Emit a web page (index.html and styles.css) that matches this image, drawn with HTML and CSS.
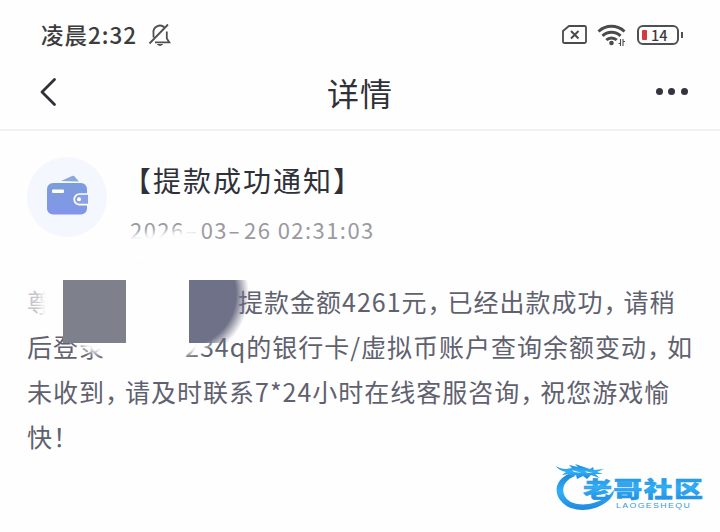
FILE: index.html
```html
<!DOCTYPE html>
<html lang="zh-CN">
  <head>
    <meta charset="UTF-8" />
    <meta name="viewport" content="width=device-width, initial-scale=1.0" />
    <title>详情</title>
    <link rel="stylesheet" href="styles.css">
  </head>
  <body>
    <div class="status-bar">
      <span class="clock">凌晨2:32</span>
      <svg class="bell" width="24" height="24" viewBox="0 0 24 24" fill="none" stroke="#505052" stroke-width="1.8">
        <path d="M5.500 14.500V10a6.500 6.500 0 0 1 11-5.500M18.800 8.500v7l2.500 3.800H7M1.500 20.500L20 1.500" />
        <path d="M9.500 21.500h5l-2.500 1z" fill="#505052" stroke-width="1" />
      </svg>
      <div class="status-icons">
        <svg width="26" height="22" viewBox="0 0 26 22" fill="none" stroke="#4b4b4d" stroke-width="1.8">
          <path d="M7 2h15.500q1.500 0 1.500 1.500v14q0 1.500-1.500 1.500h-20Q1 19 1 17.500V7z" />
          <path d="M9 7l7.500 7.500M16.500 7L9 14.500" stroke-width="2" />
        </svg>
        <svg class="wifi" width="30" height="24" viewBox="0 0 30 24" fill="none" stroke="#4b4b4d" stroke-width="3">
          <path d="M1.500 8.500a19 19 0 0 1 26 0M5.500 12.800a13 13 0 0 1 18 0M9.300 17a7.500 7.500 0 0 1 10.400 0" />
          <circle cx="14.500" cy="20" r="2.300" fill="#4b4b4d" stroke="none" />
          <path d="M21.500 20.500h2v-4.500v7M28 18.500h-2v4.500v-7" stroke-width="1.100" />
        </svg>
        <div class="battery"><i></i><span>14</span></div>
      </div>
    </div>

    <header class="nav-bar">
      <svg class="back" width="18" height="30" viewBox="0 0 18 30" fill="none" stroke="#2f3038" stroke-width="2.800" stroke-linecap="round" stroke-linejoin="round">
        <path d="M15.500 2.500L3 15 15.500 27.500" />
      </svg>
      <h1>详情</h1>
      <div class="more"><i></i><i></i><i></i></div>
    </header>

    <main class="content">
      <section class="notice">
        <div class="notice-icon">
          <svg width="42" height="42" viewBox="0 0 42 42">
            <defs>
              <linearGradient id="wallet" x1="0" y1="0" x2="0" y2="1">
                <stop offset="0" stop-color="#7b9ddc" />
                <stop offset="1" stop-color="#8295ea" />
              </linearGradient>
            </defs>
            <path d="M15 6L26 1q2-1 3 1L33 6.500z" fill="#8ca9dd" />
            <rect x="1" y="8" width="40" height="31.500" rx="6" fill="url(#wallet)" />
            <rect x="6" y="14.500" width="12" height="3.500" rx="1" fill="#fff" />
            <path d="M42 19H33.500a5.300 5.300 0 0 0 0 10.600H42" fill="#8aa1e8" stroke="#fff" stroke-width="1.700" />
            <circle cx="33" cy="24.300" r="2" fill="#fff" />
          </svg>
        </div>
        <div class="notice-head">
          <h2>【提款成功通知】</h2>
          <p class="time">2026<b>-</b>03<b>-</b>26 02:31:03</p>
          <span class="smudge smudge-date"></span>
        </div>
      </section>

      <section class="message">
        <p><span class="name">尊</span>提款金额4261元<i>，</i>已经出款成功<i>，</i>请稍</p>
        <p><span class="account">后登录</span>234q的银行卡/虚拟币账户查询余额变动<i>，</i>如</p>
        <p>未收到<i>，</i>请及时联系7*24小时在线客服咨询<i>，</i>祝您游戏愉</p>
        <p>快<i>！</i></p>
        <span class="smudge smudge-name"></span>
        <span class="smudge smudge-account"></span>
        <span class="block block-left"></span>
        <span class="block block-right"></span>
      </section>
    </main>

    <div class="watermark">
      <svg width="150" height="52" viewBox="0 0 150 52">
        <defs>
          <linearGradient id="blue" x1="0" y1="0" x2="0" y2="1">
            <stop offset="0" stop-color="#1f86d6" />
            <stop offset="0.500" stop-color="#2fb0f6" />
            <stop offset="1" stop-color="#2187df" />
          </linearGradient>
        </defs>
        <g fill="url(#blue)">
          <path d="M13 10C0 15-3 28 5 37c9 12 34 12 48-1q5-5 5-10-4 5-9 8C36 42 17 43 10 34 4 26 8 16 19 12z" />
          <path d="M0 2q4 3 10 3l6-1-3-3 9 2-3-3 9 3 6 2 3-2 1 3 10-1-7 3 6 2-8 0 5 4-9-3-4 4-4-3-6 3-1-4-6 3 0-4-8 1 4-3Q2 6 0 2z" />
          <path d="M16 6l10 3-8-1zM29 7l8 2-6 0z" fill="#e4f4ff" />
          <text class="brand" transform="translate(27 33) scale(1 .76)" textLength="120" lengthAdjust="spacing">老哥社区</text>
        </g>
        <text class="brand-en" transform="translate(60 44) scale(1.250 1)" textLength="59">LAOGESHEQU</text>
      </svg>
    </div>
  </body>
</html>
```
FILE: styles.css
```css
* {
  box-sizing: border-box;
}
body {
  font-family: "Noto Sans CJK SC", "Noto Sans", sans-serif;
  margin: 0;
  height: 532px;
  overflow: hidden;
  position: relative;
  background-color: #fefefe;
  color: #2f3038;
}
h1,
h2,
p {
  margin: 0;
  font-weight: 400;
  white-space: nowrap;
}
i {
  font-style: normal;
}
.status-bar {
  display: flex;
  align-items: center;
  height: 58px;
  padding: 12px 36px 0 41px;
}
.clock {
  font-size: 22.5px;
  font-weight: 500;
  letter-spacing: 1px;
  line-height: 42px;
  padding-bottom: 3px;
  color: #3c3c3e;
}
.bell {
  margin-left: 11px;
}
.status-icons {
  display: flex;
  align-items: center;
  margin-left: auto;
}
.wifi {
  margin: 0 10px 0 9px;
}
.battery {
  position: relative;
  display: flex;
  align-items: center;
  width: 42px;
  height: 20px;
  margin-right: 5px;
  padding-left: 3px;
  border: 2.5px solid #505052;
  border-radius: 6px;
}
.battery i {
  width: 5px;
  height: 10px;
  border-radius: 1px;
  background-color: #d13a3e;
}
.battery span {
  margin-left: 4px;
  padding-bottom: 1px;
  font-size: 14.5px;
  font-weight: 500;
  line-height: 16px;
  color: #3c3c3e;
}
.battery::after {
  content: "";
  position: absolute;
  right: -6px;
  top: 5px;
  width: 2px;
  height: 6px;
  background-color: #505052;
}
.nav-bar {
  display: flex;
  align-items: center;
  justify-content: space-between;
  height: 73px;
  padding: 0 32px 4px 39px;
  border-bottom: 2px solid #f1f1f3;
}
.nav-bar h1 {
  font-size: 32px;
  letter-spacing: 1px;
  margin-left: 7px;
}
.more {
  display: flex;
  gap: 5.5px;
}
.more i {
  width: 7px;
  height: 7px;
  border-radius: 50%;
  background-color: #343440;
}
.content {
  padding: 26px 27px 0;
}
.notice {
  display: flex;
  height: 122px;
}
.notice-icon {
  display: flex;
  align-items: center;
  justify-content: center;
  width: 80px;
  height: 80px;
  border-radius: 50%;
  background-color: #f5f7fe;
}
.notice-icon svg {
  margin-bottom: 3px;
}
.notice-head {
  position: relative;
  margin-left: 16px;
}
.notice-head h2 {
  font-size: 28px;
  letter-spacing: 2px;
  line-height: 46px;
}
.time {
  margin: 10px 0 0 7px;
  font-size: 22px;
  letter-spacing: 1.45px;
  line-height: 32px;
  color: #9a9aa3;
}
.time b {
  display: inline-block;
  width: 16px;
  font-weight: 400;
  transform: scaleX(1.6);
  transform-origin: 0 50%;
}
.message {
  position: relative;
  font-size: 25px;
  letter-spacing: 1px;
  line-height: 45px;
  color: #60616f;
}
.message i {
  display: inline-block;
  width: 20px;
  font-feature-settings: "halt";
  letter-spacing: 0;
}
.name,
.account {
  display: inline-block;
}
.name {
  width: 211px;
  color: #c5c5cb;
}
.account {
  width: 158px;
}
.smudge {
  position: absolute;
  background-color: #fefefe;
  filter: blur(3px);
}
.smudge-date {
  left: -2px;
  top: 75px;
  width: 78px;
  height: 26px;
  transform: rotate(-5deg);
}
.smudge-name {
  left: 14px;
  top: -2px;
  width: 194px;
  height: 54px;
}
.smudge-account {
  left: 44px;
  top: 36px;
  width: 142px;
  height: 39px;
  border-radius: 0 0 24px 30px;
}
.block {
  position: absolute;
  top: 1px;
  height: 63px;
}
.block-left {
  left: 36px;
  width: 63px;
  background-color: #7e808c;
}
.block-right {
  left: 162px;
  width: 70px;
  background: radial-gradient(circle at -6px 14px, #6e7187 53px, rgba(110, 113, 135, 0) 66px);
}
.watermark {
  position: absolute;
  left: 556px;
  top: 464px;
}
.watermark svg {
  display: block;
  overflow: visible;
}
.brand {
  font-size: 29px;
  font-weight: 900;
  stroke: #2799ea;
  stroke-width: 0.6px;
}
.brand-en {
  font-family: "Liberation Sans", sans-serif;
  font-size: 7px;
  fill: #3b96dd;
}
```
